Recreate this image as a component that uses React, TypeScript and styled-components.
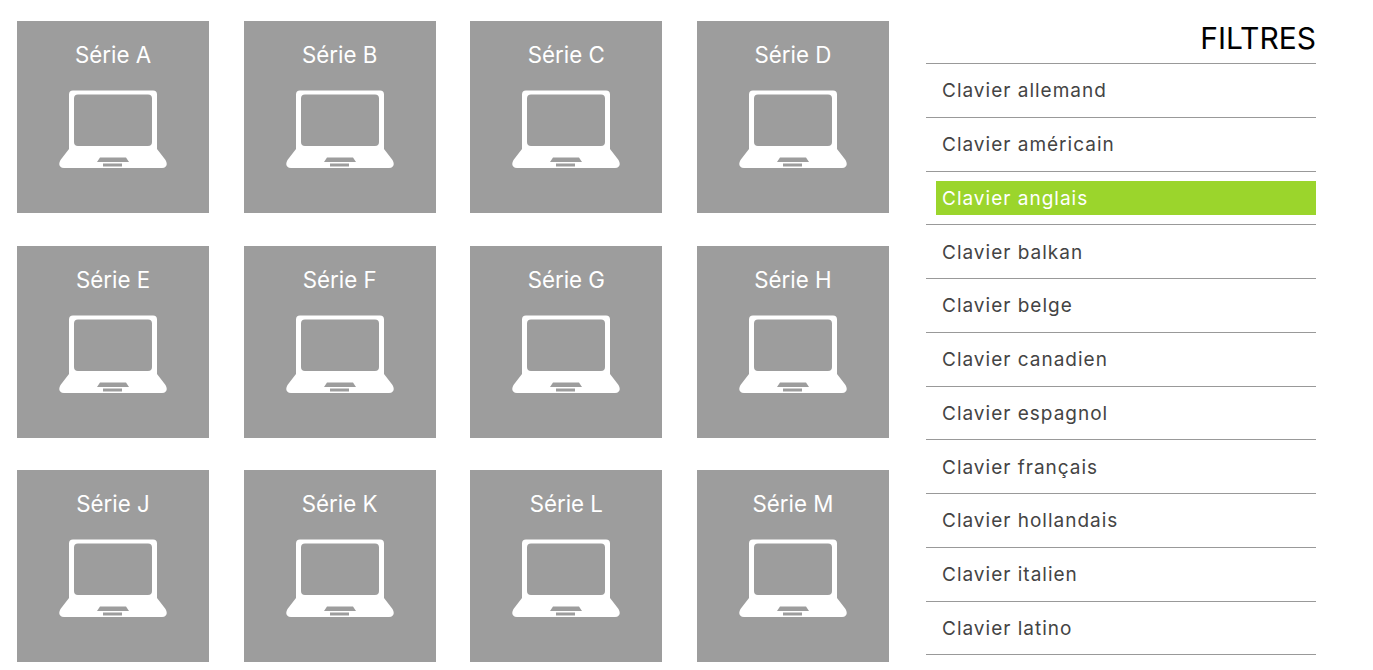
import React from "react";
import styled, { createGlobalStyle } from "styled-components";

const Global = createGlobalStyle`
  html, body { margin: 0; padding: 0; background: #fff; overflow: hidden; }
  body { font-family: Inter, "Liberation Sans", sans-serif; }
`;

const Page = styled.div`
  display: flex;
  align-items: flex-start;
  height: 670px;
  overflow: hidden;
  padding: 21px 0 0 17px;
  box-sizing: border-box;
`;

const Grid = styled.div`
  display: grid;
  grid-template-columns: repeat(4, 192px);
  grid-auto-rows: 192px;
  column-gap: 34.67px;
  row-gap: 32.5px;
  width: 872px;
  flex: none;
`;

const Card = styled.a`
  display: flex;
  flex-direction: column;
  align-items: center;
  background: #9d9d9d;
  color: #fff;
  padding-top: 20px;
  box-sizing: border-box;
`;

const CardLabel = styled.span`
  font-size: 22.3px;
  line-height: 28px;
  height: 28px;
`;

const LaptopIcon = styled.svg`
  width: 110px;
  height: 78px;
  margin-top: 21px;
  display: block;
  fill: #fff;
`;

const Side = styled.aside`
  width: 390px;
  margin-left: 37px;
  flex: none;
  margin-top: -21px;
`;

const Title = styled.h2`
  margin: 0;
  height: 64px;
  box-sizing: border-box;
  padding-top: 21px;
  text-align: right;
  font-size: 30px;
  line-height: 34px;
  font-weight: 400;
  color: #000;
  border-bottom: 1px solid #999;
`;

const List = styled.ul`
  list-style: none;
  margin: 0;
  padding: 0;
`;

const Item = styled.li`
  height: 53.75px;
  box-sizing: border-box;
  border-bottom: 1px solid #999;
  display: flex;
  align-items: center;
  padding-left: 10px;
`;

const ItemLabel = styled.span<{ $active?: boolean }>`
  flex: 1;
  height: 34px;
  line-height: 36px;
  padding-left: 6px;
  font-size: 19px;
  letter-spacing: 1px;
  white-space: nowrap;
  color: ${(p) => (p.$active ? "#fff" : "#444")};
  background: ${(p) => (p.$active ? "#9bd52c" : "transparent")};
`;

const series = ["A", "B", "C", "D", "E", "F", "G", "H", "J", "K", "L", "M"];
const filters = [
  "allemand", "américain", "anglais", "balkan", "belge", "canadien",
  "espagnol", "français", "hollandais", "italien", "latino",
];

const Laptop = () => (
  <LaptopIcon viewBox="0 0 110 78">
    <path
      fillRule="evenodd"
      d="M15 .5H95Q99 .5 99 4.5V59L107.5 70Q110 74.5 107.5 76.8Q106.5 78 104 78H6Q3.5 78 2.5 76.8Q0 74.5 2.5 70L11 59V4.5Q11 .5 15 .5ZM20 4.5Q16 4.5 16 8.5V52Q16 56 20 56H90Q94 56 94 52V8.5Q94 4.5 90 4.5ZM42 67.5 39 72H71L68 67.5ZM45 73.5V76.5H64V73.5Z"
    />
  </LaptopIcon>
);

export default function App() {
  return (
    <Page>
      <Global />
      <Grid>
        {series.map((s) => (
          <Card key={s}>
            <CardLabel>Série {s}</CardLabel>
            <Laptop />
          </Card>
        ))}
      </Grid>
      <Side>
        <Title>FILTRES</Title>
        <List>
          {filters.map((f) => (
            <Item key={f}>
              <ItemLabel $active={f === "anglais"}>Clavier {f}</ItemLabel>
            </Item>
          ))}
        </List>
      </Side>
    </Page>
  );
}
